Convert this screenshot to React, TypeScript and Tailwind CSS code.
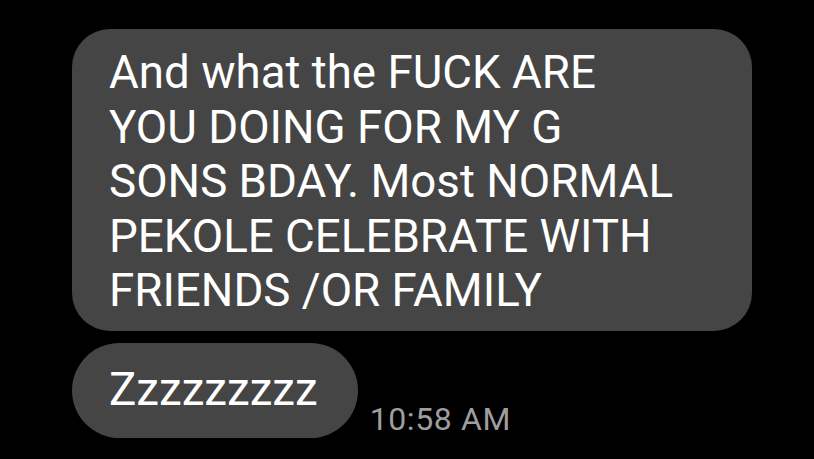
const lines = [
  "And what the FUCK ARE",
  "YOU DOING FOR MY G",
  "SONS BDAY. Most NORMAL",
  "PEKOLE CELEBRATE WITH",
  "FRIENDS /OR FAMILY",
];

export default function App() {
  return (
    <div className="w-[814px] h-[459px] bg-black overflow-hidden pl-[72px] pt-[29px] font-['Roboto',sans-serif] flex flex-col gap-[12px]">
      <div className="w-[680px] rounded-[38px] bg-[#454545] pl-[37px] pr-6 pt-[17px] pb-[12px] text-white text-[45.7px] leading-[54.5px]">
        {lines.map((l) => (
          <div key={l} className="whitespace-nowrap">
            {l}
          </div>
        ))}
      </div>
      <div className="flex items-end gap-[12px]">
        <div className="h-[95px] rounded-full bg-[#454545] pl-[37px] pr-[40px] flex items-center text-white text-[45.7px] leading-none">
          Zzzzzzzzz
        </div>
        <div className="text-[32px] tracking-[0.6px] leading-[36px] text-[#9e9e9e] pb-[1px]">10:58 AM</div>
      </div>
    </div>
  );
}
